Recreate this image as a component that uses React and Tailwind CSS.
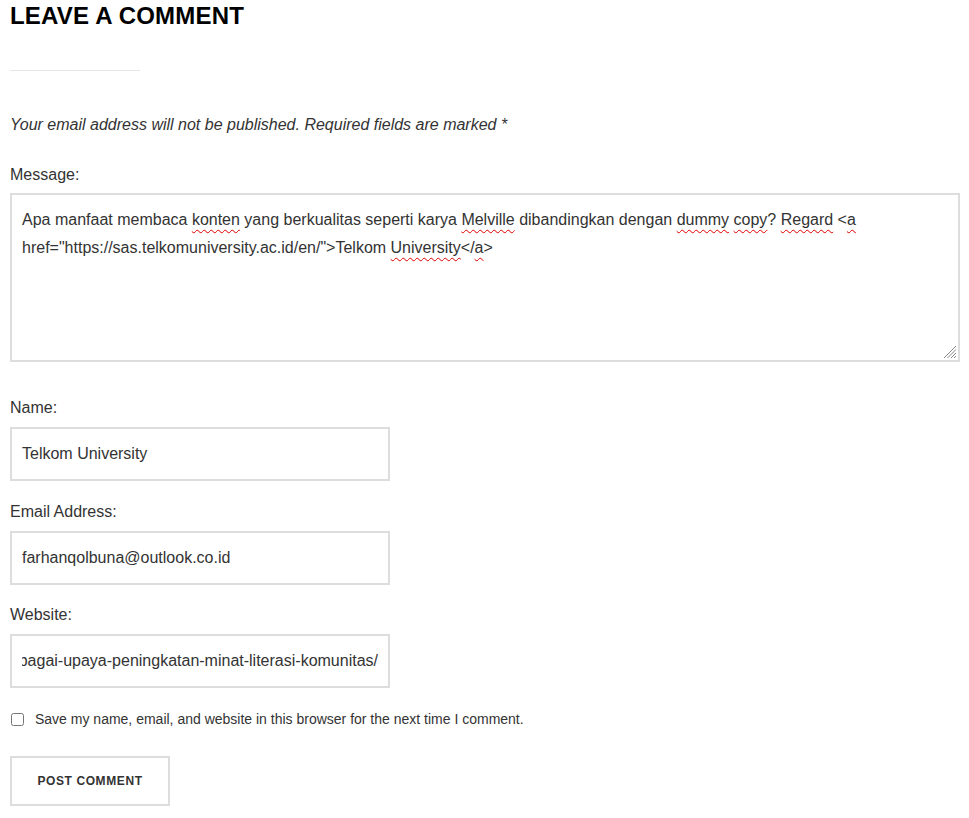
import React from "react";

const sp = "underline decoration-wavy decoration-[#e00000] decoration-[1px] underline-offset-[4px]";

function Label({ children, className = "" }) {
  return (
    <div className={"text-[16px] leading-[24px] text-[#333] " + className}>{children}</div>
  );
}

function Field({ children, className = "" }) {
  return (
    <div className={"w-[380px] h-[54px] border-2 border-[#dddddd] bg-white px-[10px] py-[13px] text-[16px] leading-[24px] text-[#333] " + className}>
      {children}
    </div>
  );
}

export default function App() {
  return (
    <div className="bg-white min-h-[818px] w-[969px] font-['Liberation_Sans',Arial,sans-serif]">
      <div className="ml-[10px] w-[950px] flex flex-col">
        <h2 className="text-[24px] leading-[31px] font-bold text-black tracking-[0.2px]">LEAVE A COMMENT</h2>
        <div className="mt-[39px] w-[130px] h-px bg-[#e6e6e6]" />
        <p className="mt-[42px] text-[16px] leading-[24px] italic text-[#333]">
          Your email address will not be published. Required fields are marked *
        </p>
        <Label className="mt-[26px]">Message:</Label>
        <div className="relative mt-[6px] h-[169px] w-[950px] border-2 border-[#dddddd] bg-white pt-[11px] px-[10px] text-[16px] leading-[28px] text-[#333]">
          Apa manfaat membaca <span className={sp}>konten</span> yang berkualitas seperti karya{" "}
          <span className={sp}>Melville</span> dibandingkan dengan <span className={sp}>dummy</span>{" "}
          <span className={sp}>copy</span>? <span className={sp}>Regard</span> &lt;<span className={sp}>a</span>{" "}
          href="https://sas.telkomuniversity.ac.id/en/"&gt;Telkom <span className={sp}>University</span>&lt;/
          <span className={sp}>a</span>&gt;
          <svg className="absolute right-[1px] bottom-[1px]" width="14" height="14" viewBox="0 0 14 14">
            <g stroke="#8a8a8a" strokeWidth="1">
              <line x1="13" y1="1" x2="1" y2="13" />
              <line x1="13" y1="4.5" x2="4.5" y2="13" />
              <line x1="13" y1="8" x2="8" y2="13" />
              <line x1="13" y1="11" x2="11" y2="13" />
            </g>
          </svg>
        </div>
        <Label className="mt-[34px]">Name:</Label>
        <Field className="mt-[7px]">Telkom University</Field>
        <Label className="mt-[19px]">Email Address:</Label>
        <Field className="mt-[7px]">farhanqolbuna@outlook.co.id</Field>
        <Label className="mt-[18px]">Website:</Label>
        <Field className="mt-[7px]">
          <div className="overflow-hidden whitespace-nowrap flex justify-end">
            <span className="shrink-0">https://sas.telkomuniversity.ac.id/en/membaca-sebagai-upaya-peningkatan-minat-literasi-komunitas/</span>
          </div>
        </Field>
        <div className="mt-[21px] h-[20px] flex items-center">
          <input type="checkbox" className="m-0 ml-[1px] w-[13px] h-[13px]" />
          <span className="ml-[11px] text-[14px] leading-[20px] text-[#333]">
            Save my name, email, and website in this browser for the next time I comment.
          </span>
        </div>
        <button className="mt-[27px] w-[160px] h-[50px] border-2 border-[#dddddd] bg-white flex items-center justify-center text-[12px] font-bold tracking-[0.6px] text-[#333]">
          POST COMMENT
        </button>
      </div>
    </div>
  );
}
